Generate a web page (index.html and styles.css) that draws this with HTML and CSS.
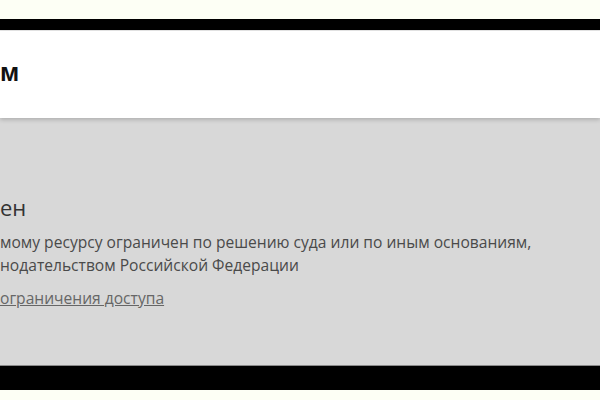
FILE: index.html
```html
<!DOCTYPE html>
<html lang="ru">
<head>
<meta charset="utf-8">
<link rel="stylesheet" href="styles.css">
</head>
<body>
<div class="page">
  <div class="topbar"></div>
  <header class="header"><span class="logo">м</span></header>
  <main class="main">
    <h1 class="title">ен</h1>
    <p class="text">мому ресурсу ограничен по решению суда или по иным основаниям,<br>нодательством Российской Федерации</p>
    <a class="link" href="#">ограничения доступа</a>
  </main>
  <footer class="footer"></footer>
</div>
</body>
</html>
```
FILE: styles.css
```css
html, body {
  margin: 0;
  padding: 0;
  background: #fdfff5;
}
.page {
  padding-top: 19px;
  width: 600px;
  overflow: hidden;
}
.topbar {
  height: 11px;
  background: #000;
  border-bottom: 1px solid #e6e6e6;
}
.header {
  height: 87px;
  background: #fff;
  display: flex;
  align-items: center;
  position: relative;
  z-index: 1;
  box-shadow: 0 2px 4px rgba(0,0,0,0.18);
}
.logo {
  font-family: "Liberation Sans", Arial, sans-serif;
  font-weight: bold;
  font-size: 26px;
  color: #111;
  margin-top: -5px;
}
.main {
  background: #d8d8d8;
  height: 246px;
  border-bottom: 1px solid #8a8a8a;
  padding-top: 1px;
  box-sizing: content-box;
  font-family: "Open Sans", "Noto Sans", sans-serif;
  color: #4a4a4a;
}
.title {
  margin: 73px 0 0;
  font-size: 22px;
  font-weight: 400;
  line-height: 30px;
  color: #333;
}
.text {
  margin: 9px 0 0;
  font-size: 15.6px;
  line-height: 23px;
}
.link {
  display: inline-block;
  margin-top: 10px;
  font-size: 15.6px;
  line-height: 22px;
  color: #666;
}
.footer {
  height: 24px;
  background: #000;
}
```
